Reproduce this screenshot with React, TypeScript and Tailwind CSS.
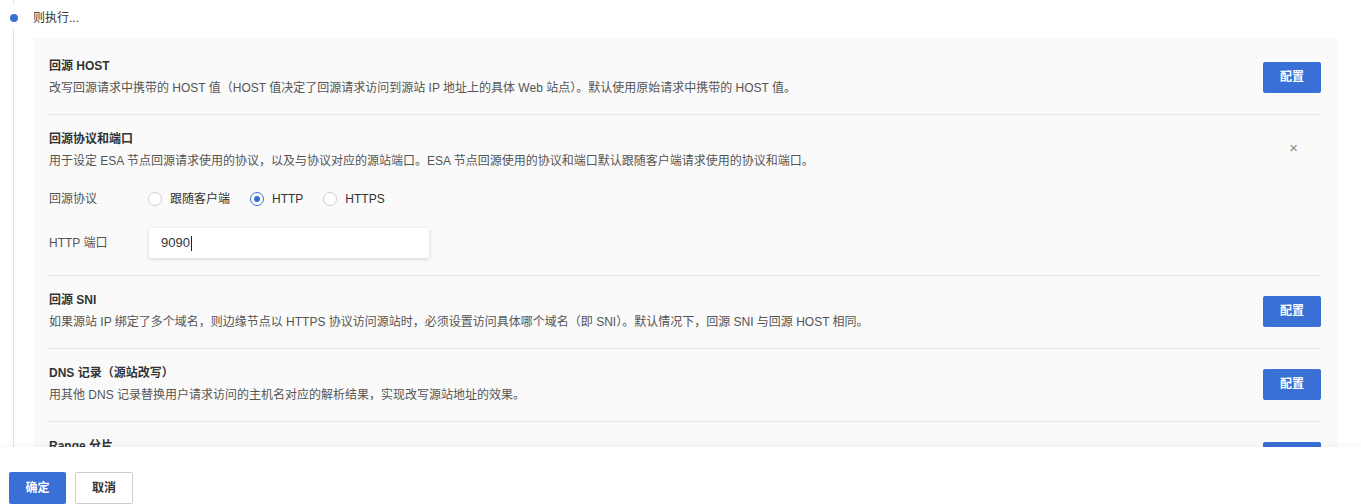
import type { ReactNode } from 'react';

const rules: { title: string; desc: string }[] = [
  {
    title: '回源 HOST',
    desc: '改写回源请求中携带的 HOST 值（HOST 值决定了回源请求访问到源站 IP 地址上的具体 Web 站点）。默认使用原始请求中携带的 HOST 值。',
  },
];

const rest: { title: string; desc: string }[] = [
  {
    title: '回源 SNI',
    desc: '如果源站 IP 绑定了多个域名，则边缘节点以 HTTPS 协议访问源站时，必须设置访问具体哪个域名（即 SNI）。默认情况下，回源 SNI 与回源 HOST 相同。',
  },
  {
    title: 'DNS 记录（源站改写）',
    desc: '用其他 DNS 记录替换用户请求访问的主机名对应的解析结果，实现改写源站地址的效果。',
  },
  {
    title: 'Range 分片',
    desc: '开启后，回源请求将按照 Range 分片获取源站资源。',
  },
];

function ConfigButton() {
  return (
    <button className="h-[31px] w-[58px] shrink-0 rounded-[2px] bg-[#3a6fd6] text-[12px] font-bold text-white">
      配置
    </button>
  );
}

function Row({ title, desc, children }: { title: string; desc: string; children?: ReactNode }) {
  return (
    <div className="flex items-center justify-between border-b border-[#e6e6e6] pt-[14px] pb-4">
      <div>
        <div className="text-[12px] leading-5 font-bold text-[#333]">{title}</div>
        <div className="mt-[2px] text-[12px] leading-5 text-[#555]">{desc}</div>
      </div>
      {children ?? <ConfigButton />}
    </div>
  );
}

function Radio({ label, checked }: { label: string; checked?: boolean }) {
  return (
    <label className="flex items-center gap-2">
      <span
        className={
          checked
            ? 'flex h-[14px] w-[14px] items-center justify-center rounded-full border border-[#3a6fd6] bg-white'
            : 'h-[14px] w-[14px] rounded-full border border-[#cfcfcf] bg-white'
        }
      >
        {checked && <span className="h-[6px] w-[6px] rounded-full bg-[#3a6fd6]" />}
      </span>
      <span className="text-[12px] leading-5 text-[#333]">{label}</span>
    </label>
  );
}

export default function App() {
  return (
    <div className="flex h-[504px] w-[1361px] flex-col overflow-hidden bg-white font-['Liberation_Sans','Noto_Sans_CJK_SC',sans-serif]">
      <div className="flex min-h-0 flex-1 overflow-hidden pr-6">
        {/* timeline */}
        <div className="flex w-[27px] shrink-0 flex-col items-center">
          <div className="h-1 w-px bg-[#e3e3e3]" />
          <div className="mt-[10px] h-2 w-2 rounded-full bg-[#3a6fd6]" />
          <div className="mt-[7px] w-px flex-1 bg-[#e3e3e3]" />
        </div>

        <div className="ml-[6px] flex-1">
          <div className="pt-2 pb-[10px] text-[12px] leading-5 text-[#333]">则执行...</div>

          <div className="bg-[#fafafa] px-4 pt-1">
            {rules.map((r) => (
              <Row key={r.title} {...r} />
            ))}

            {/* 回源协议和端口 (expanded) */}
            <div className="flex items-start justify-between border-b border-[#e6e6e6] pt-[14px] pb-[17px]">
              <div>
                <div className="text-[12px] leading-5 font-bold text-[#333]">回源协议和端口</div>
                <div className="mt-[2px] text-[12px] leading-5 text-[#555]">
                  用于设定 ESA 节点回源请求使用的协议，以及与协议对应的源站端口。ESA 节点回源使用的协议和端口默认跟随客户端请求使用的协议和端口。
                </div>
                <div className="mt-[18px] flex items-center">
                  <span className="w-[99px] text-[12px] leading-5 text-[#555]">回源协议</span>
                  <div className="flex items-center gap-5">
                    <Radio label="跟随客户端" />
                    <Radio label="HTTP" checked />
                    <Radio label="HTTPS" />
                  </div>
                </div>
                <div className="mt-[19px] flex items-center">
                  <span className="w-[100px] text-[12px] leading-5 text-[#555]">HTTP 端口</span>
                  <div className="flex h-[30px] w-[280px] items-center bg-white pl-3 text-[13px] text-[#333] shadow-[0_1px_4px_rgba(0,0,0,0.16)]">
                    9090
                    <span className="ml-px h-[15px] w-px bg-[#222]" />
                  </div>
                </div>
              </div>
              <span className="mt-[11px] mr-[23px] text-[15px] leading-none text-[#888]">×</span>
            </div>

            {rest.map((r) => (
              <Row key={r.title} {...r} />
            ))}
          </div>
        </div>
      </div>

      <div className="relative z-10 flex h-[57px] shrink-0 gap-[9px] bg-white pt-[25px] pl-[9px] shadow-[0_-2px_6px_rgba(0,0,0,0.04)]">
        <button className="h-[32px] w-[57px] rounded-[2px] bg-[#3a6fd6] text-[12px] font-bold text-white">确定</button>
        <button className="h-[32px] w-[58px] rounded-[2px] border border-[#cccccc] bg-white text-[12px] font-bold text-[#333]">
          取消
        </button>
      </div>
    </div>
  );
}
